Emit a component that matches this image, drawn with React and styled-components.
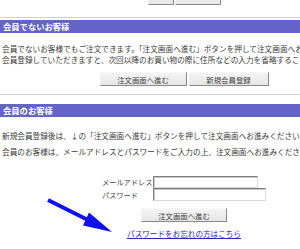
import React from 'react'
import styled, { createGlobalStyle } from 'styled-components'

const GlobalStyle = createGlobalStyle`
  html, body {
    margin: 0;
    padding: 0;
    background: #fff;
    overflow: hidden;
  }
  body {
    font-family: "Noto Sans CJK JP", "Liberation Sans", sans-serif;
    color: #333;
  }
`

const Page = styled.div`
  position: relative;
  width: 368px;
  height: 250px;
  overflow: hidden;
`

const Divider = styled.div`
  height: 1px;
  background: #d0d0d0;
  margin-top: ${(p) => p.$top}px;
`

const SectionHead = styled.div`
  margin-top: ${(p) => p.$top}px;
  height: 13px;
  line-height: 13px;
  background: #6464c8;
  color: #fff;
  font-weight: bold;
  font-size: 8.3px;
  padding-left: 3px;
  white-space: nowrap;
`

const Para = styled.div`
  margin-top: ${(p) => p.$top}px;
  padding-left: 2px;
  font-size: 7.65px;
  line-height: ${(p) => p.$lh}px;
  white-space: nowrap;
  color: #3a3a3a;
`

const ButtonRow = styled.div`
  display: flex;
  justify-content: center;
  gap: ${(p) => p.$gap || 2}px;
  margin-top: ${(p) => p.$top}px;
`

const Button = styled.div`
  box-sizing: border-box;
  width: ${(p) => p.$w}px;
  height: 14px;
  display: flex;
  align-items: center;
  justify-content: center;
  font-size: 7.4px;
  color: #444;
  background: linear-gradient(#f4f4f4, #e6e6e6);
  border: 1px solid;
  border-color: #f8f8f8 #8a8a8a #8a8a8a #f0f0f0;
  white-space: nowrap;
`

const Form = styled.div`
  display: grid;
  grid-template-columns: 51px auto;
  width: 164px;
  margin: 16px auto 0;
  align-items: center;
`

const Label = styled.div`
  font-size: 7.2px;
  color: #444;
  white-space: nowrap;
  line-height: 12px;
`

const Input = styled.div`
  box-sizing: border-box;
  width: ${(p) => p.$w}px;
  height: ${(p) => p.$h}px;
  border: 1px solid;
  border-color: #7c7c7c #dadada #dadada #7c7c7c;
  box-shadow: inset 1px 1px 0 #c8c8c8;
  background: #fff;
`

const LinkRow = styled.div`
  margin-top: 6px;
  text-align: center;
  line-height: 12px;
  font-size: 7.6px;
  a {
    color: #2a2ab8;
    text-decoration: underline;
  }
`

const Arrow = styled.svg`
  position: absolute;
  left: 0;
  top: 0;
  pointer-events: none;
`

export default function App() {
  return (
    <>
      <GlobalStyle />
      <Page>
        <ButtonRow $top={-9} $gap={1}>
          <Button $w={26} />
          <Button $w={46} />
        </ButtonRow>
        <Divider $top={12} />
        <SectionHead $top={2}>会員でないお客様</SectionHead>
        <Para $top={11} $lh={10.5}>
          会員でないお客様でもご注文できます。「注文画面へ進む」ボタンを押して注文画面へお進みください。
          <br />
          会員登録していただきますと、次回以降のお買い物の際に住所などの入力を省略することができます。
        </Para>
        <ButtonRow $top={7}>
          <Button $w={87}>注文画面へ進む</Button>
          <Button $w={80}>新規会員登録</Button>
        </ButtonRow>
        <Divider $top={8} />
        <SectionHead $top={9}>会員のお客様</SectionHead>
        <Para $top={11} $lh={16}>
          新規会員登録後は、↓の「注文画面へ進む」ボタンを押して注文画面へお進みください。
          <br />
          会員のお客様は、メールアドレスとパスワードをご入力の上、注文画面へお進みください。
        </Para>
        <Form>
          <Label>メールアドレス</Label>
          <Input $w={105} $h={12} />
          <Label>パスワード</Label>
          <Input $w={113} $h={13} />
        </Form>
        <ButtonRow $top={7}>
          <Button $w={86}>注文画面へ進む</Button>
        </ButtonRow>
        <LinkRow>
          <a href="#">パスワードをお忘れの方はこちら</a>
        </LinkRow>
        <Divider $top={9} />
        <Arrow width="300" height="250" viewBox="0 0 300 250">
          <line x1="48" y1="200" x2="88" y2="220" stroke="#1010ee" strokeWidth="4" />
          <polygon points="112,232 89,212.5 83,225.5" fill="#1010ee" />
        </Arrow>
      </Page>
    </>
  )
}
